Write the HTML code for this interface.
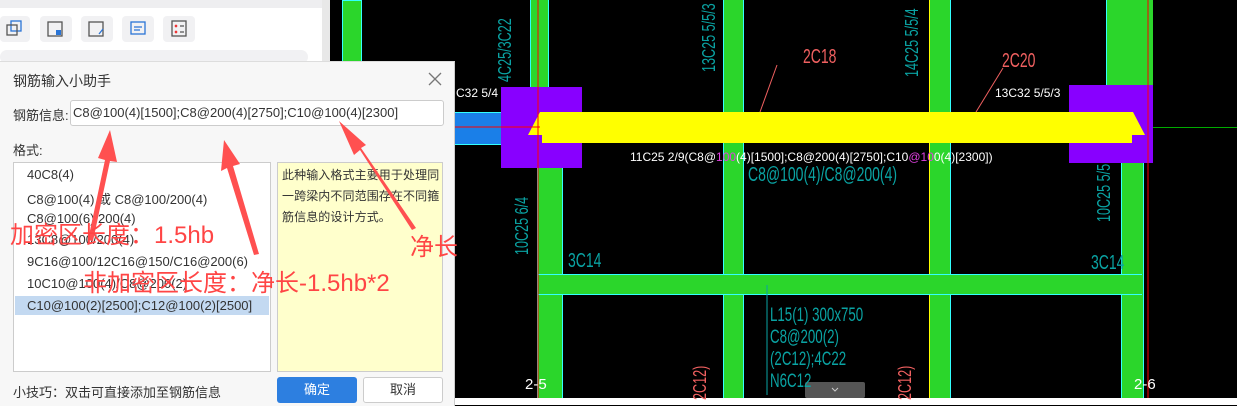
<!DOCTYPE html>
<html><head><meta charset="utf-8"><style>
body{margin:0;width:1237px;height:405px;overflow:hidden;position:relative;background:#000;font-family:"Liberation Sans","Noto Sans CJK SC",sans-serif}
.a{position:absolute}
.dlg{left:0;top:61px;width:454px;height:344px;background:#f7f7f7;border-top:1px solid #ddd;border-right:1px solid #ccc}
.t{font-size:13px;color:#333;position:absolute;white-space:nowrap}
.it{position:absolute;left:27px;font-size:13px;color:#333;white-space:nowrap}
.cy{position:absolute;color:#0aa3a3;font-family:"Liberation Sans Narrow","Liberation Sans",sans-serif;white-space:nowrap;transform-origin:0 0}
.h{transform:scaleX(0.7)}
.v{transform:rotate(-90deg) scaleX(0.7)}
.red{position:absolute;color:#ff4545;font-size:24px;white-space:nowrap}
</style></head><body>
<div class="a" style="left:0;top:0;width:322px;height:405px;background:#fff"></div>
<div class="a" style="left:0;top:0;width:322px;height:8px;background:#eeeef0"></div>
<div class="a" style="left:322px;top:0;width:8px;height:405px;background:#e8e8e8"></div>
<div class="a" style="left:0;top:16px;width:30px;height:26px;background:#f1f1f3;border-radius:4px"></div>
<div class="a" style="left:40px;top:16px;width:32px;height:26px;background:#f1f1f3;border-radius:4px"></div>
<div class="a" style="left:81px;top:16px;width:32px;height:26px;background:#f1f1f3;border-radius:4px"></div>
<div class="a" style="left:122px;top:16px;width:32px;height:26px;background:#f1f1f3;border-radius:4px"></div>
<div class="a" style="left:163px;top:16px;width:32px;height:26px;background:#f1f1f3;border-radius:4px"></div>
<svg class="a" style="left:0;top:0" width="200" height="45" fill="none" stroke-width="1.3">
<rect x="11" y="21" width="10" height="10" stroke="#2a74d6"/><rect x="7" y="25" width="10" height="10" stroke="#555"/>
<rect x="48" y="22" width="14" height="14" stroke="#555"/><rect x="56" y="30" width="5" height="5" fill="#2a74d6"/>
<rect x="89" y="22" width="14" height="14" stroke="#555"/><path d="M99 34l4-5" stroke="#2a74d6"/>
<rect x="131" y="22" width="14" height="12" stroke="#2a74d6"/><path d="M134 27h8M134 30h6" stroke="#2a74d6"/>
<rect x="172" y="21" width="14" height="15" stroke="#555"/><path d="M175 25l2 2M177 25l-2 2M175 31l2 2M177 31l-2 2" stroke="#e33"/><path d="M180 26h4M180 32h4" stroke="#555"/>
</svg>
<div class="a" style="left:0;top:50px;width:308px;height:14px;background:#f1f1f3;border-radius:7px"></div>

<div class="a" style="left:330px;top:0;width:907px;height:398px;background:#000"></div>
<div class="a" style="left:342px;top:0;width:18px;height:60px;background:#2bd62b;border:1px solid #3ff"></div>
<div class="a" style="left:1150px;top:127px;width:87px;height:1px;background:#0a0"></div>
<div class="a" style="left:530px;top:0;width:17px;height:90px;background:#2bd62b;border-left:1px solid #3ff;border-right:1px solid #3ff"></div>
<div class="a" style="left:537px;top:140px;width:24px;height:258px;background:#2bd62b;border-left:1px solid #3ff;border-right:1px solid #3ff"></div>
<div class="a" style="left:723px;top:0;width:19px;height:398px;background:#2bd62b;border-left:1px solid #3ff;border-right:1px solid #3ff"></div>
<div class="a" style="left:929px;top:0;width:20px;height:398px;background:#2bd62b;border-left:1px solid #ff0;border-right:1px solid #3ff"></div>
<div class="a" style="left:1106px;top:0;width:46px;height:90px;background:#2bd62b;border-left:1px solid #3ff"></div>
<div class="a" style="left:1121px;top:140px;width:21px;height:258px;background:#2bd62b;border-left:1px solid #3ff;border-right:1px solid #3ff"></div>
<div class="a" style="left:538px;top:274px;width:604px;height:19px;background:#2bd62b;border-top:1px solid #3ff;border-bottom:1px solid #3ff"></div>
<div class="a" style="left:455px;top:112px;width:50px;height:31px;background:#1a7fe8;border-top:1px solid #3ff;border-bottom:1px solid #3ff"></div>
<div class="a" style="left:501px;top:87px;width:81px;height:81px;background:#8800ff"></div>
<div class="a" style="left:1069px;top:85px;width:84px;height:78px;background:#8800ff"></div>
<svg class="a" style="left:0;top:0" width="1237" height="405">
<polygon points="540,112 1133,112 1145,135 1132,135 1132,143 542,143 542,135 528,135" fill="#ff0"/>
<line x1="538" y1="0" x2="538" y2="398" stroke="#f00" stroke-width="1"/>
<line x1="1148" y1="0" x2="1148" y2="398" stroke="#f00" stroke-width="1"/>
<line x1="455" y1="127" x2="540" y2="127" stroke="#f00"/>
<line x1="777" y1="65" x2="760" y2="112" stroke="#f06060"/>
<line x1="1003" y1="68" x2="976" y2="112" stroke="#f06060"/>
<line x1="767" y1="285" x2="767" y2="395" stroke="#0aa3a3"/>
<rect x="805" y="382" width="60" height="16" fill="#555" rx="2"/>
<path d="M832 388l3 3 3-3" stroke="#ccc" fill="none"/>
</svg>
<div class="a" style="left:455px;top:398px;width:782px;height:7px;background:#fff"></div>
<div class="cy h" style="left:803px;top:46px;font-size:20px;color:#f06060">2C18</div>
<div class="cy h" style="left:1002px;top:50px;font-size:20px;color:#f06060">2C20</div>
<div class="cy v" style="left:495px;top:82px;font-size:18px">4C25/3C22</div>
<div class="cy v" style="left:699px;top:72px;font-size:18px">13C25 5/5/3</div>
<div class="cy v" style="left:902px;top:77px;font-size:18px">14C25 5/5/4</div>
<div class="cy v" style="left:512px;top:255px;font-size:18px">10C25 6/4</div>
<div class="cy v" style="left:1094px;top:222px;font-size:18px">10C25 5/5</div>
<div class="cy h" style="left:568px;top:250px;font-size:20px">3C14</div>
<div class="cy h" style="left:1091px;top:252px;font-size:20px">3C14</div>
<div class="cy h" style="left:748px;top:164px;font-size:20px">C8@100(4)/C8@200(4)</div>
<div class="cy h" style="left:770px;top:305px;font-size:19px;line-height:22px">L15(1) 300x750<br>C8@200(2)<br>(2C12);4C22<br>N6C12</div>
<div class="cy v" style="left:690px;top:400px;font-size:18px;color:#f06060">2C12)</div>
<div class="cy v" style="left:895px;top:400px;font-size:18px;color:#f06060">2C12)</div>
<div class="a" style="left:456px;top:86px;color:#fff;font-size:12px">C32 5/4</div>
<div class="a" style="left:995px;top:86px;color:#fff;font-size:12px">13C32 5/5/3</div>
<div class="a" style="left:630px;top:150px;color:#fff;font-size:12px;white-space:nowrap">11C25 2/9(C8@<span style="color:#e040e0">100</span>(4)[1500];C8@200(4)[2750];C10<span style="color:#e040e0">@10</span>0(4)[2300])</div>
<div class="a" style="left:525px;top:376px;color:#fff;font-size:15px">2-5</div>
<div class="a" style="left:1134px;top:376px;color:#fff;font-size:15px">2-6</div>

<div class="a dlg"></div>
<div class="t" style="left:13px;top:71px;font-size:14px">钢筋输入小助手</div>
<svg class="a" style="left:428px;top:72px" width="14" height="14"><path d="M1 1L13 13M13 1L1 13" stroke="#777" stroke-width="1.3"/></svg>
<div class="t" style="left:13px;top:105px">钢筋信息:</div>
<div class="a" style="left:70px;top:100px;width:372px;height:24px;background:#fff;border:1px solid #ccc;border-radius:3px"></div>
<div class="t" style="left:73px;top:105px">C8@100(4)[1500];C8@200(4)[2750];C10@100(4)[2300]</div>
<div class="t" style="left:13px;top:140px">格式:</div>
<div class="a" style="left:13px;top:162px;width:256px;height:208px;background:#fff;border:1px solid #ccc"></div>
<div class="a" style="left:15px;top:296px;width:254px;height:19px;background:#c3d9f1"></div>
<div class="it" style="top:167px">40C8(4)</div>
<div class="it" style="top:189px">C8@100(4) 或 C8@100/200(4)</div>
<div class="it" style="top:211px">C8@100(6)/200(4)</div>
<div class="it" style="top:232px">13C8@100/200(4)</div>
<div class="it" style="top:254px">9C16@100/12C16@150/C16@200(6)</div>
<div class="it" style="top:276px">10C10@100(4)/C8@200(2)</div>
<div class="it" style="top:298px">C10@100(2)[2500];C12@100(2)[2500]</div>
<div class="a" style="left:277px;top:162px;width:164px;height:208px;background:#ffffcc;border:1px solid #ccc"></div>
<div class="t" style="left:282px;top:165px;line-height:21px;white-space:normal;width:162px;font-size:12px;letter-spacing:0.1px">此种输入格式主要用于处理同一跨梁内不同范围存在不同箍筋信息的设计方式。</div>
<div class="t" style="left:13px;top:382px">小技巧：双击可直接添加至钢筋信息</div>
<div class="a" style="left:277px;top:377px;width:80px;height:26px;background:#2d7fe0;border-radius:3px;color:#fff;font-size:13px;text-align:center;line-height:26px">确定</div>
<div class="a" style="left:363px;top:377px;width:78px;height:24px;background:#fff;border:1px solid #ccc;border-radius:3px;color:#333;font-size:13px;text-align:center;line-height:24px">取消</div>

<svg class="a" style="left:0;top:0" width="460" height="405">
<g fill="#ff5050">
<polygon points="88,240 105,160 98,158 110,130 117,162 110,161 93,241"/>
<polygon points="254,255 227,168 221,171 224,140 240,164 233,166 259,254"/>
<polygon points="412,230 360,150 354,155 339,121 366,145 361,148 416,228"/>
</g>
</svg>
<div class="red" style="left:10px;top:215px">加密区长度：1.5hb</div>
<div class="red" style="left:83px;top:263px">非加密区长度：净长-1.5hb*2</div>
<div class="red" style="left:410px;top:227px">净长</div>
</body></html>
